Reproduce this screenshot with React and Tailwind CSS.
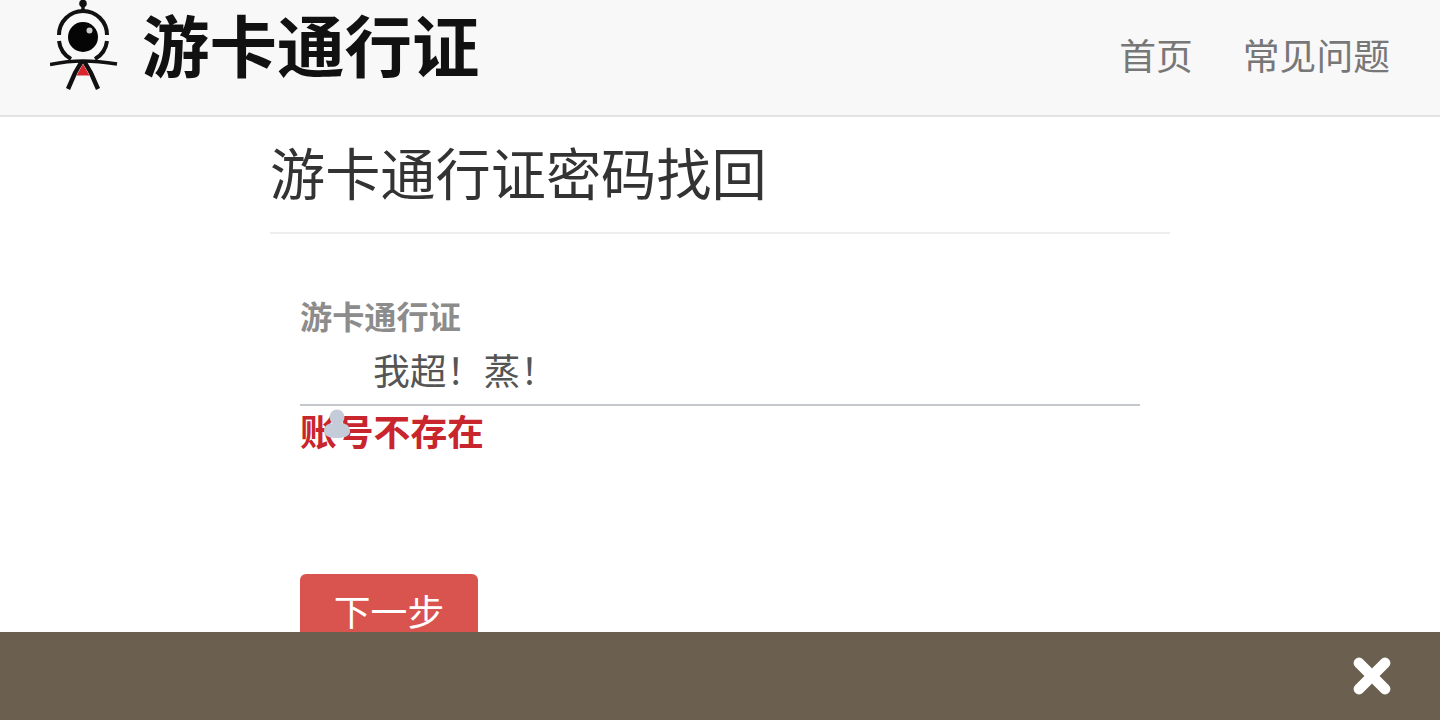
import { X } from 'lucide-react';

const FONT = "font-['Liberation_Sans','Noto_Sans_CJK_SC',sans-serif]";

function LogoMark() {
  return (
    <svg width="68" height="92" viewBox="0 0 68 92" className="shrink-0">
      {/* antenna */}
      <path d="M33 2 L33 13" stroke="#111" strokeWidth="3.4" fill="none" />
      <circle cx="33" cy="3.5" r="3.8" fill="#111" />
      {/* outer ring, split left and right */}
      <path d="M9 35 A24 24 0 0 1 57 35" stroke="#111" strokeWidth="4" fill="none" />
      <path d="M9 41 A24 24 0 0 0 21 59" stroke="#111" strokeWidth="4" fill="none" />
      <path d="M57 41 A24 24 0 0 1 45 59" stroke="#111" strokeWidth="4" fill="none" />
      {/* eye */}
      <circle cx="33" cy="37" r="15" fill="#050505" />
      <circle cx="39.5" cy="30.5" r="3" fill="#ccc" />
      {/* arms */}
      <path d="M0 64.5 Q18 61 33 61 Q48 61 67 64" stroke="#111" strokeWidth="3.6" fill="none" />
      {/* legs */}
      <path d="M32 61 L25 73 L18 89" stroke="#111" strokeWidth="4.4" fill="none" />
      <path d="M34 61 L41 73 L48 89" stroke="#111" strokeWidth="4.4" fill="none" />
      <path d="M33 64 L26.5 75.5 L39.5 75.5 Z" fill="#d8262c" />
    </svg>
  );
}

function UserGlyph() {
  return (
    <svg width="28" height="30" viewBox="0 0 28 30" className="absolute left-[323px] top-[409px]">
      <circle cx="14" cy="8" r="7.5" fill="#c3ccd8" />
      <path d="M1 22 Q1 13 14 14 Q27 13 27 22 Q27 29 14 29 Q1 29 1 22 Z" fill="#c3ccd8" />
    </svg>
  );
}

export default function App() {
  return (
    <div className={`relative h-[720px] overflow-hidden bg-white ${FONT}`}>
      {/* Navbar */}
      <header className="flex h-[117px] items-center justify-between border-b-2 border-[#e3e3e3] bg-[#f8f8f8] pl-[50px] pr-[50px]">
        <div className="flex items-center gap-[24px] self-start">
          <LogoMark />
          <span className="mt-[5px] text-[67.5px] font-bold leading-[78px] text-[#111] blur-[0.5px]">游卡通行证</span>
        </div>
        <nav className="flex items-center gap-[50px] text-[36.8px] leading-[40px] text-[#777]">
          <span>首页</span>
          <span>常见问题</span>
        </nav>
      </header>

      {/* Content */}
      <main className="mx-auto w-[900px]">
        <h1 className="border-b-2 border-[#eee] pb-[24px] pt-[27px] text-[55.2px] font-normal leading-[64px] text-[#333]">
          游卡通行证密码找回
        </h1>

        <form className="px-[30px] pt-[64px]">
          <label className="block text-[32.2px] font-bold leading-[40px] text-[#8c8c8c]">游卡通行证</label>
          <div className="mt-[2px] h-[66px] border-b-2 border-[#c4c7cc] pl-[73px] pt-[11px] text-[36.8px] leading-[44px] text-[#555]">
            我超！蒸！
          </div>
          <p className="mt-[6px] text-[36.8px] font-bold leading-[44px] text-[#c9252c]">账号不存在</p>
          <button
            type="button"
            className="mt-[118px] h-[80px] w-[178px] rounded-[6px] bg-[#d9534f] text-[36.8px] leading-[80px] text-white"
          >
            下一步
          </button>
        </form>
      </main>

      <UserGlyph />

      {/* Bottom bar */}
      <div className="absolute bottom-0 left-0 right-0 flex h-[88px] items-center justify-end bg-[#6b604f] pr-[42px]">
        <X size={52} strokeWidth={5} color="#fff" />
      </div>
    </div>
  );
}
